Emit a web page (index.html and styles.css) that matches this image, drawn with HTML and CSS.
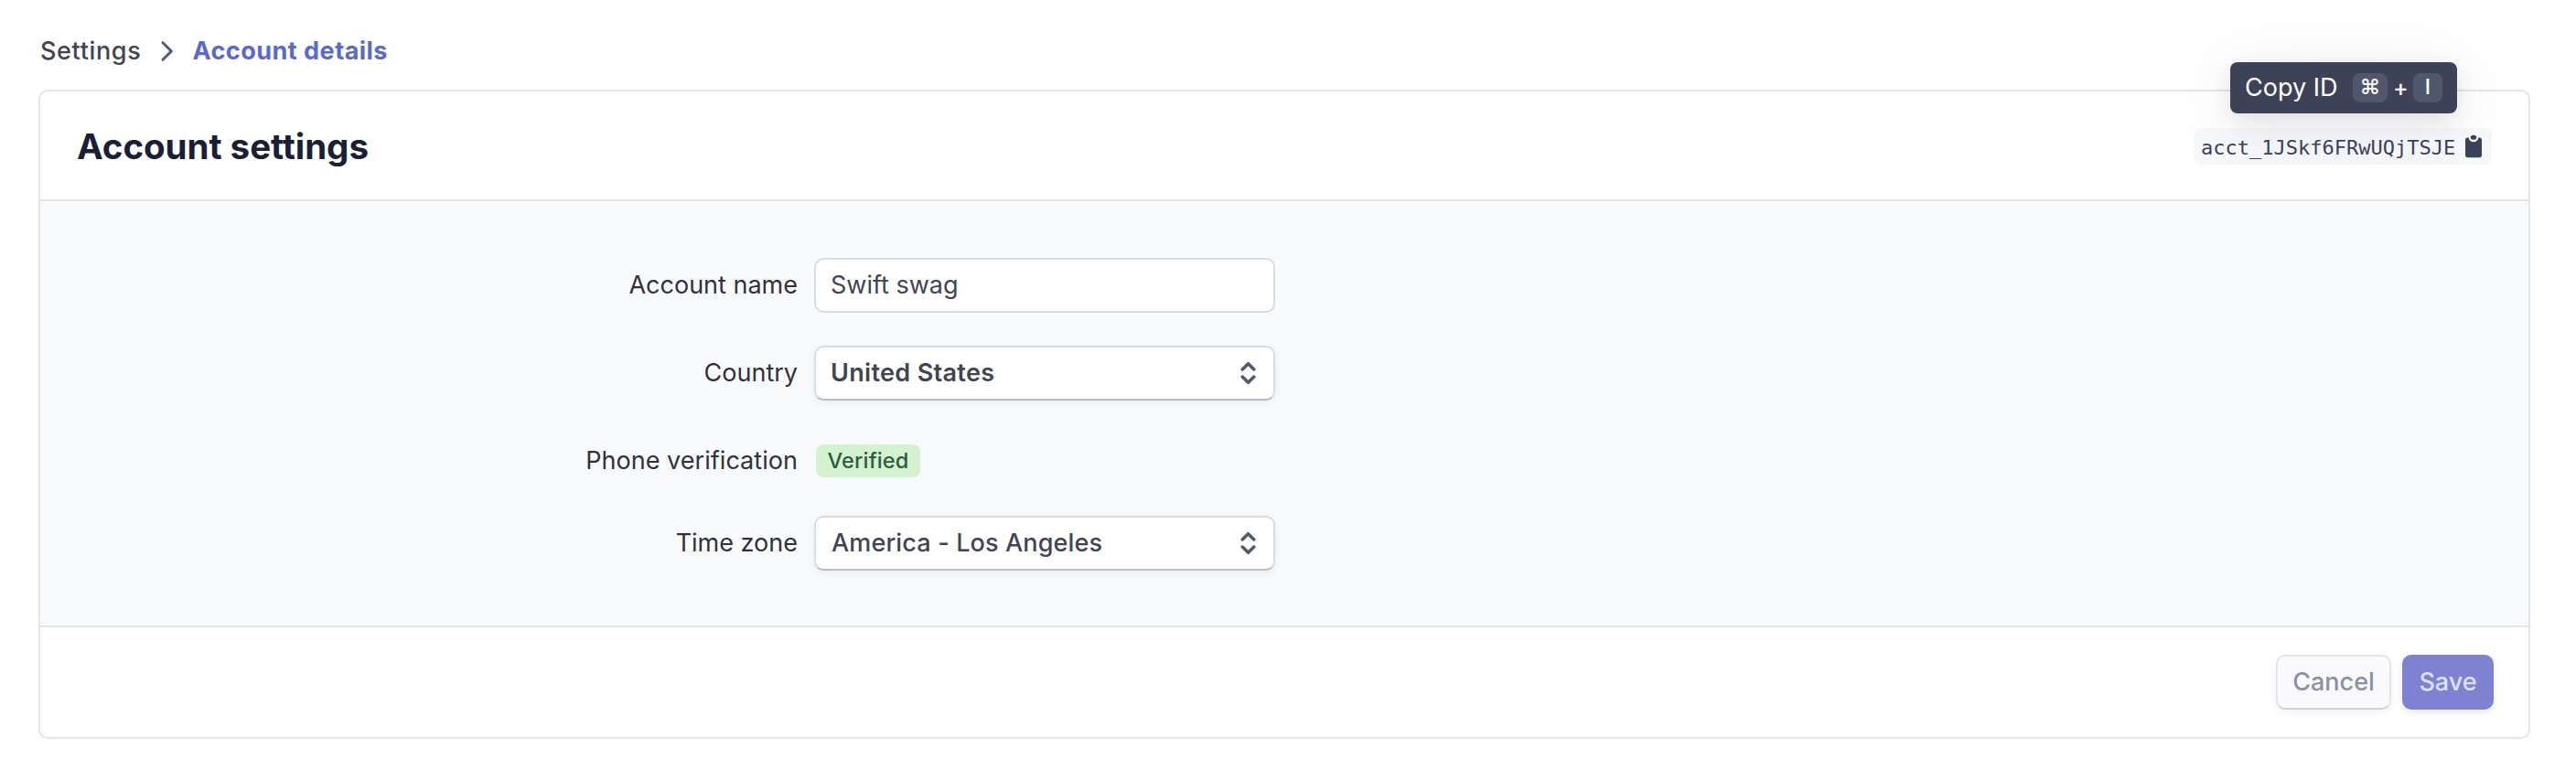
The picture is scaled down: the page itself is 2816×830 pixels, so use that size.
FILE: index.html
```html
<!DOCTYPE html>
<html lang="en">
<head>
<meta charset="utf-8">
<title>Account settings</title>
<link rel="stylesheet" href="styles.css">
</head>
<body>
<nav class="breadcrumb">
  <a class="crumb">Settings</a>
  <svg class="crumb-sep" width="14" height="22" viewBox="0 0 14 22"><path d="M2 1.700 11.300 11 2 20.300"/></svg>
  <a class="crumb crumb-current">Account details</a>
</nav>
<main class="card">
  <header class="card-header">
    <h1 class="title">Account settings</h1>
    <div class="account-id">
      <code class="id-text">acct_1JSkf6FRwUQjTSJE</code>
      <svg class="clipboard" width="18" height="26" viewBox="0 0 18 26">
        <path d="M2.600 3.500H3.600C3.900 6.700 6.200 8.300 9 8.300S14.100 6.700 14.400 3.500H15.400A2.600 2.600 0 0 1 18 6.100v16.500a2.600 2.600 0 0 1-2.600 2.600H2.600A2.600 2.600 0 0 1 0 22.600V6.100A2.600 2.600 0 0 1 2.600 3.500Z"/>
        <ellipse cx="9" cy="3.200" rx="3.200" ry="2.500"/>
      </svg>
      <div class="tooltip">
        <span class="tooltip-label">Copy ID</span>
        <kbd class="key key-cmd">⌘</kbd>
        <span class="plus">+</span>
        <kbd class="key key-i">I</kbd>
      </div>
    </div>
  </header>
  <form class="card-body">
    <div class="row">
      <label class="label">Account name</label>
      <div class="field">Swift swag</div>
    </div>
    <div class="row">
      <label class="label">Country</label>
      <div class="field select"><span class="country">United States</span>
        <svg class="arrows" width="17" height="26" viewBox="0 0 17 26"><path d="M2.200 9 8.500 2.700 14.800 9M2.200 17 8.500 23.300 14.800 17"/></svg></div>
    </div>
    <div class="row row-status">
      <label class="label label-phone">Phone verification</label>
      <span class="badge">Verified</span>
    </div>
    <div class="row">
      <label class="label">Time zone</label>
      <div class="field select"><span class="timezone">America - Los Angeles</span>
        <svg class="arrows" width="17" height="26" viewBox="0 0 17 26"><path d="M2.200 9 8.500 2.700 14.800 9M2.200 17 8.500 23.300 14.800 17"/></svg></div>
    </div>
  </form>
  <footer class="card-footer">
    <button class="btn btn-cancel" type="button">Cancel</button>
    <button class="btn btn-save" type="button">Save</button>
  </footer>
</main>
</body>
</html>
```
FILE: styles.css
```css
* { box-sizing: border-box; }
body { margin: 0; padding: 0 50px 0 42px; background: #fff; color: #414552; font: 400 27px/36px Inter, sans-serif; }

.breadcrumb { display: flex; align-items: center; height: 98px; padding: 14px 0 0 2px; }
.crumb { font-weight: 500; letter-spacing: .65px; }
.crumb-sep { margin: 0 20px 0 22px; fill: none; stroke: #545969; stroke-width: 3; stroke-linecap: round; stroke-linejoin: round; }
.crumb-current { color: #5b6ac8; font-weight: 700; letter-spacing: .48px; }

.card { height: 710px; border: 2px solid #e3e5e9; border-radius: 10px; display: flex; flex-direction: column; }
.card-header { height: 120px; border-bottom: 2px solid #e3e5e9; display: flex; align-items: center; justify-content: space-between; padding: 2px 40px 0 40px; }
.title { margin: 0; font-size: 38.5px; line-height: 48px; font-weight: 700; letter-spacing: -.04px; color: #1a1f36; }

.account-id { position: relative; height: 40px; width: 326px; border-radius: 8px; background: #f7f8fc; display: flex; align-items: center; padding: 0 11px 0 8px; justify-content: space-between; color: #3c4257; }
.id-text { font: 22px/36px "DejaVu Sans Mono", monospace; padding-top: 4px; }
.clipboard { fill: #3c4257; }

.tooltip { position: absolute; left: 40px; top: -72px; width: 248px; height: 56px; padding: 0 16px; border-radius: 8px; background: #3e4256; color: #fff; display: flex; align-items: center; box-shadow: 0 8px 24px rgba(0,0,0,.09), 0 10px 70px rgba(60,66,87,.1); }
.key { height: 32px; border-radius: 8px; background: #50566b; font: 500 23px/31px Inter, sans-serif; text-align: center; }
.key-cmd { width: 38px; margin-left: 16.6px; }
.plus { width: 16px; margin: 0 6px; font: 500 25px/32px Inter, sans-serif; text-align: center; }
.key-i { width: 32px; }

.card-body { margin: 0; height: 466px; padding: 62px 0 0 40px; background: #f9fafc; border-bottom: 2px solid #e3e5e9; display: flex; flex-direction: column; gap: 36px; }
.row { display: flex; align-items: center; height: 60px; }
.row-status { height: 54px; padding-top: 6px; }
.label { width: 788px; text-align: right; color: #30313d; }
.label-phone { letter-spacing: .04px; }
.field { width: 504px; height: 60px; margin-left: 18px; padding: 0 19px 0 16px; border: 2px solid #d8dbe1; border-radius: 10px; background: #fff; display: flex; align-items: center; justify-content: space-between; }
.select { font-weight: 500; border-bottom-color: #b9bbc2; box-shadow: 0 3px 8px rgba(60,66,87,.08); }
.country { font-weight: 600; letter-spacing: .33px; }
.timezone { padding-left: 1px; letter-spacing: .15px; }
.arrows { fill: none; stroke: #545969; stroke-width: 3.500; stroke-linecap: round; stroke-linejoin: round; }
.badge { width: 114px; height: 36px; margin-left: 20px; border-radius: 8px; background: #d4f2cd; color: #285e42; font: 500 23.5px/35px Inter, sans-serif; letter-spacing: .15px; text-align: center; }

.card-footer { flex: 1; display: flex; justify-content: flex-end; align-items: center; gap: 12px; padding-right: 38px; }
.btn { height: 60px; border-radius: 10px; padding: 0; font: 500 27px/36px Inter, sans-serif; }
.btn-cancel { width: 126px; border: 2px solid #e3e4e8; border-bottom-color: #d0d2d8; background: #faf9fe; color: #8a91a0; box-shadow: 0 3px 8px rgba(60,66,87,.08); }
.btn-save { width: 100px; border: 0; background: #7f81d3; color: #dfe0fb; box-shadow: 0 3px 8px rgba(60,66,87,.12); }
```
